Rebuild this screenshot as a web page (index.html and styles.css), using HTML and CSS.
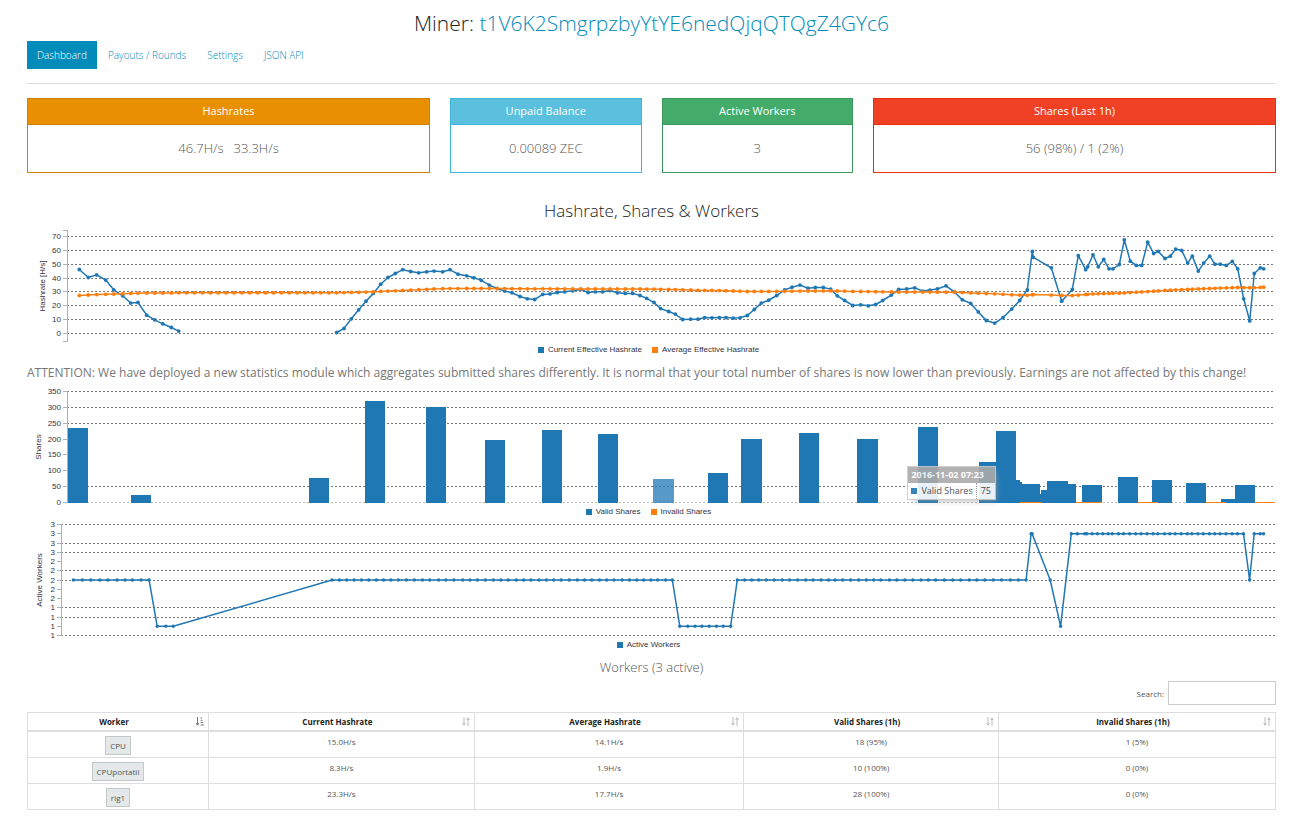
FILE: index.html
```html
<!DOCTYPE html>
<html lang="en">
  <head>
    <meta charset="UTF-8" />
    <meta name="viewport" content="width=device-width, initial-scale=1.0" />
    <title>Miner</title>
    <link rel="stylesheet" href="styles.css">
  </head>
  <body>
    <h1>Miner: <a href="#">t1V6K2SmgrpzbyYtYE6nedQjqQTQgZ4GYc6</a></h1>

    <nav class="tabs">
      <a class="active" href="#dashboard">Dashboard</a>
      <a href="#payouts">Payouts / Rounds</a>
      <a href="#settings">Settings</a>
      <a href="#api">JSON API</a>
    </nav>

    <div class="panels">
      <section class="panel wide warning">
        <h3>Hashrates</h3>
        <p><span>46.7H/s</span><span>33.3H/s</span></p>
      </section>
      <section class="panel info">
        <h3>Unpaid Balance</h3>
        <p>0.00089 ZEC</p>
      </section>
      <section class="panel success">
        <h3>Active Workers</h3>
        <p>3</p>
      </section>
      <section class="panel wide danger">
        <h3>Shares (Last 1h)</h3>
        <p>56 (98%) / 1 (2%)</p>
      </section>
    </div>

    <h2>Hashrate, Shares &amp; Workers</h2>
    <div class="chart">
      <svg id="hashrateChart" height="118"></svg>
      <div class="legend">
        <span class="blue">Current Effective Hashrate</span>
        <span class="orange">Average Effective Hashrate</span>
      </div>
    </div>

    <p class="notice">ATTENTION: We have deployed a new statistics module which aggregates submitted shares differently. It is normal that your total number of shares is now lower than previously. Earnings are not affected by this change!</p>

    <div class="chart">
      <svg id="sharesChart" height="120"></svg>
      <div class="legend">
        <span class="blue">Valid Shares</span>
        <span class="orange">Invalid Shares</span>
      </div>
      <div class="tooltip">
        <div class="tooltip-title">2016-11-02 07:23</div>
        <div class="tooltip-row">
          <span class="name">Valid Shares</span>
          <span class="value">75</span>
        </div>
      </div>
    </div>

    <div class="chart workers-chart">
      <svg id="workersChart" height="120"></svg>
      <div class="legend">
        <span class="blue">Active Workers</span>
      </div>
    </div>

    <h4>Workers (3 active)</h4>
    <div class="search">
      <label for="search">Search:</label>
      <input type="search" id="search" />
    </div>

    <svg class="defs">
      <symbol id="sort" viewBox="0 0 8 9">
        <path d="M2 0v8M0.5 6L2 8.200L3.500 6M6 9V1M4.500 3L6 0.800L7.500 3" />
      </symbol>
      <symbol id="sort-asc" viewBox="0 0 8 9">
        <path d="M1.500 0v8M0 6L1.500 8.200L3 6M4.500 1h1.500M4.500 3.300h2M4.500 5.600h2.700M4.500 8h3.500" />
      </symbol>
    </svg>
    <table>
      <colgroup>
        <col class="c1" /><col class="c2" /><col class="c3" /><col class="c4" /><col class="c5" />
      </colgroup>
      <thead>
        <tr>
          <th><div><span>Worker</span><svg class="sorted"><use href="#sort-asc" /></svg></div></th>
          <th><div><span>Current Hashrate</span><svg><use href="#sort" /></svg></div></th>
          <th><div><span>Average Hashrate</span><svg><use href="#sort" /></svg></div></th>
          <th><div><span>Valid Shares (1h)</span><svg><use href="#sort" /></svg></div></th>
          <th><div><span>Invalid Shares (1h)</span><svg><use href="#sort" /></svg></div></th>
        </tr>
      </thead>
      <tbody>
        <tr>
          <td><a href="#CPU">CPU</a></td>
          <td>15.0H/s</td>
          <td>14.1H/s</td>
          <td>18 (95%)</td>
          <td>1 (5%)</td>
        </tr>
        <tr>
          <td><a href="#CPUportatil">CPUportatil</a></td>
          <td>8.3H/s</td>
          <td>1.9H/s</td>
          <td>10 (100%)</td>
          <td>0 (0%)</td>
        </tr>
        <tr>
          <td><a href="#rig1">rig1</a></td>
          <td>23.3H/s</td>
          <td>17.7H/s</td>
          <td>28 (100%)</td>
          <td>0 (0%)</td>
        </tr>
      </tbody>
    </table>

    <script src="charts.js"></script>
  </body>
</html>
```

FILE: styles.css
```css
body {
  margin: 0;
  padding: 8px 18px 18px 27px;
  background: #fff;
  color: #555;
  font-family: 'Open Sans', sans-serif;
  font-size: 8px;
  line-height: 11px;
}
h1,
h2,
h3,
h4,
p {
  margin: 0;
  font-weight: 300;
  text-align: center;
}
a {
  color: #008cba;
  text-decoration: none;
}
h1 {
  color: #222;
  font-size: 21px;
  line-height: 30px;
}
h2 {
  margin: 25px 0 2px;
  color: #222;
  font-size: 17px;
  line-height: 26px;
}
h4 {
  margin: 7px 0 4px;
  font-size: 13px;
  line-height: 20px;
}

.tabs {
  display: flex;
  margin-top: 3px;
  padding-bottom: 14px;
  border-bottom: 1px solid #ddd;
}
.tabs a {
  padding: 0 10px;
  margin-right: 1px;
  font-size: 10px;
  font-weight: 300;
  line-height: 28px;
}
.tabs .active {
  background: #008cba;
  color: #fff;
}

.panels {
  display: grid;
  grid-template-columns: repeat(12, 1fr);
  gap: 20px;
  margin-top: 14px;
}
.panel {
  grid-column: span 2;
  border: 1px solid;
}
.panel.wide {
  grid-column: span 4;
}
.panel h3 {
  padding-bottom: 1px;
  border-bottom: 1px solid;
  border-color: inherit;
  color: #fff;
  font-size: 11px;
  font-weight: 400;
  line-height: 24px;
}
.panel p {
  display: flex;
  justify-content: center;
  gap: 10px;
  font-size: 13px;
  line-height: 47px;
}
.warning {
  border-color: #d08002;
}
.warning h3 {
  background: #e99002;
}
.info {
  border-color: #3db5d8;
}
.info h3 {
  background: #5bc0de;
}
.success {
  border-color: #3c9a5f;
}
.success h3 {
  background: #43ac6a;
}
.danger {
  border-color: #ea2f10;
}
.danger h3 {
  background: #f04124;
}

.chart {
  position: relative;
  color: #334;
  font-family: 'Liberation Sans', sans-serif;
}
.chart svg {
  display: block;
  width: 100%;
}
.workers-chart {
  margin-top: 2px;
}
.chart text {
  fill: #334;
  font-size: 8px;
}
.axis {
  fill: none;
  stroke: #a9b3bd;
  shape-rendering: crispEdges;
}
.grid {
  stroke: #777;
  stroke-dasharray: 2 2;
  shape-rendering: crispEdges;
}
.grid.base {
  stroke: #bbb;
}
.line {
  fill: none;
  stroke-width: 1.5;
}
.line.blue {
  stroke: #1f77b4;
}
.line.orange {
  stroke: #ff7f0e;
}
.dot.blue,
.bar {
  fill: #1f77b4;
}
.dot.orange,
.invalid {
  fill: #ff7f0e;
}
.bar,
.invalid {
  shape-rendering: crispEdges;
}
.bar.hover {
  opacity: 0.75;
}
.legend {
  display: flex;
  justify-content: center;
  gap: 10px;
  padding-right: 6px;
  line-height: 11px;
}
.legend span {
  display: flex;
  align-items: center;
  gap: 4px;
}
.legend span::before,
.tooltip .name::before {
  content: '';
  width: 6px;
  height: 6px;
  background: #1f77b4;
}
.legend .orange::before {
  background: #ff7f0e;
}

.notice {
  margin: 8px 0 3px;
  font-size: 12px;
  font-weight: 400;
  line-height: 20px;
  text-align: left;
  color: #777;
}

.tooltip {
  position: absolute;
  top: 80px;
  right: 280px;
  border: 1px solid #ccc;
  background: #fff;
  box-shadow: 3px 3px 6px -3px #999;
  color: #444;
  font-family: 'Open Sans', sans-serif;
  font-size: 9px;
  opacity: 0.9;
}
.tooltip-title {
  padding: 0 8px 0 3px;
  background: #aaa;
  color: #fff;
  font-weight: 700;
  line-height: 16px;
}
.tooltip-row {
  display: flex;
  line-height: 16px;
}
.tooltip .name {
  flex: 1;
  display: flex;
  align-items: center;
  gap: 4px;
  padding: 0 3px;
}
.tooltip .value {
  padding: 0 4px;
  border-left: 1px dotted #999;
}

.search {
  display: flex;
  justify-content: flex-end;
  align-items: center;
  gap: 4px;
  margin-bottom: 7px;
}
.search input {
  box-sizing: border-box;
  width: 108px;
  height: 24px;
  padding: 2px 4px;
  border: 1px solid #ccc;
  font: inherit;
}

.defs {
  display: none;
}
table {
  width: 100%;
  border-collapse: collapse;
  table-layout: fixed;
  text-align: center;
}
.c1 {
  width: 14.5%;
}
.c2 {
  width: 21.3%;
}
.c3 {
  width: 21.6%;
}
.c4 {
  width: 20.4%;
}
th,
td {
  border: 1px solid #ddd;
}
th {
  padding: 4px;
  border-bottom-width: 2px;
  color: #222;
  font-weight: 700;
  line-height: 9px;
}
th div {
  display: flex;
  align-items: center;
}
th span {
  flex: 1;
}
th svg {
  width: 8px;
  height: 9px;
  fill: none;
  stroke: #bbb;
}
th .sorted {
  stroke: #777;
}
td {
  padding: 4px 4px 2px;
  vertical-align: top;
}
td a {
  display: block;
  width: fit-content;
  margin: 0 auto;
  padding: 3px 4px;
  border: 1px solid #c4c8c8;
  background: #e3e8e8;
  color: #555;
}
```

FILE: charts.js
```js
// time axis runs from 0 to SPAN
const SPAN = 1208;

const hashrate = [
  [12.3, 46.2], [21.3, 40.4], [29.7, 42.3], [38.7, 38.5], [46.7, 31.5], [55.7, 27.2], [63.7, 21.9],
  [71, 22.4], [79.7, 13.2], [87.7, 9.9], [95.7, 7], [104.3, 4.3], [111.7, 1.7],
  null,
  [269.7, 0.7], [277, 3.6], [284.3, 10.6], [291.7, 17.1], [299, 23.3], [306.3, 28.9], [313.7, 35.6],
  [321, 40.4], [328.3, 43.3], [335.7, 46], [343.7, 44.7], [351.7, 43.8], [359.7, 44.5], [367, 45],
  [375.7, 44.5], [383, 46], [391, 42.8], [399.7, 41.6], [407, 40.2], [414.3, 38.3], [422.3, 34.9],
  [430.3, 32.5], [437.7, 30.6], [445, 29.4], [453, 26.7], [460.3, 25], [467.7, 24.5], [475.7, 28.2],
  [483, 28.6], [490.3, 29.6], [497.7, 30.1], [505.7, 30.8], [513.7, 31.8], [521, 29.6], [528.3, 30.1],
  [535.7, 30.1], [543, 31], [550.3, 29.4], [558.3, 28.9], [565.7, 28.9], [573, 27.4], [579.7, 25.3],
  [587, 22.4], [593.7, 18], [601.7, 15.9], [608.3, 14], [615.7, 10.1], [623.7, 10.3], [631, 10.3],
  [637.7, 11.5], [645, 11.3], [652.3, 11.5], [659, 11.5], [666.3, 11.1], [673, 11.3], [680.3, 13],
  [687.3, 17.3], [694.3, 21.9], [701.7, 24], [709.7, 27.4], [717.7, 31.5], [725, 33.4], [733, 34.9],
  [741, 32.7], [748.3, 33.2], [756.3, 33.2], [763.7, 32], [770.3, 27.2], [777.7, 23.8], [785.7, 20.2],
  [793.7, 20.7], [801.3, 20], [808.7, 20.9], [815.7, 23.8], [824.3, 27.7], [831.7, 31.8], [839.7, 32.2],
  [847.7, 33], [855.7, 30.6], [863, 31.3], [870.3, 32.2], [879, 34.4], [887.3, 30.1], [895.3, 24.3],
  [903.7, 21.7], [911.3, 15.6], [919.3, 9.4], [927.7, 7.5], [936, 11.5], [944.7, 17.6], [952.7, 23.8],
  [960.3, 31.5], [965.3, 59.2], [966.3, 54.9], [984.3, 47.4], [994.7, 23.3], [1005.3, 31.8],
  [1011.3, 56.1], [1018.7, 46], [1020.7, 48.1], [1026, 56.8], [1031.3, 48.1], [1036.7, 53.4],
  [1042, 46.7], [1046, 46.7], [1052.3, 49.8], [1057.3, 67.6], [1063.3, 52.2], [1069.3, 49.1],
  [1074.7, 49.1], [1080.7, 65.9], [1086.7, 57.7], [1091.3, 59.2], [1098, 54.1], [1103.3, 55.8],
  [1108.7, 60.9], [1114.7, 59.9], [1120.7, 50.8], [1125.3, 55.8], [1131.3, 45], [1136.7, 50.8],
  [1142.7, 55.8], [1148, 50], [1153.3, 50], [1159.3, 49.1], [1165.3, 52], [1170.7, 46.7],
  [1176.7, 25], [1182.7, 9.1], [1187.3, 43.3], [1193.3, 47.4], [1196.7, 46.7],
];

const averageTrend = [
  [12, 27.5], [38.7, 28.3], [71, 29.1], [120, 29.4], [270, 29.4], [300, 29.9], [328, 30.8],
  [343, 31.3], [367, 32.2], [383, 32.4], [422, 32.5], [445, 32.3], [573, 32.1], [602, 31.8],
  [631, 31.2], [659, 30.9], [680, 30.3], [710, 30.4], [763, 30.8], [786, 30.4], [832, 29.9],
  [887, 29.8], [903, 29.3], [928, 28.6], [945, 27.9], [960, 27.5], [966, 28.1], [985, 27.7],
  [1005, 27.3], [1011, 27.7], [1026, 28.6], [1052, 29.1], [1080, 30.2], [1103, 31.3],
  [1136, 32.3], [1170, 33.2], [1187, 33], [1197, 33.4],
];

// [start, width, shares]
const validShares = [
  [1, 20, 234], [64, 20, 24], [242, 20, 77], [298, 20, 319], [359, 20, 300], [418, 20, 197],
  [475, 20, 228], [531, 20, 216], [586, 21, 75], [641, 20, 93], [674, 21, 200], [732, 20, 219],
  [790, 21, 200], [851, 20, 238], [912, 20, 128], [929, 20, 225], [933, 20, 71], [935, 20, 65],
  [953, 20, 59], [973, 20, 27], [974, 20, 40], [980, 21, 68], [989, 20, 59], [1015, 20, 55],
  [1051, 20, 81], [1085, 20, 71], [1119, 20, 62], [1154, 20, 12], [1168, 20, 55],
];
const invalidShares = [[953, 21], [1009, 26], [1071, 20], [1139, 20], [1188, 20]];

function averageAt(t) {
  const i = averageTrend.findIndex((p) => p[0] >= t);
  if (i < 1) return averageTrend[0][1];
  const [t0, v0] = averageTrend[i - 1];
  const [t1, v1] = averageTrend[i];
  return v0 + ((v1 - v0) * (t - t0)) / (t1 - t0);
}

function workersAt(t) {
  if (t > 90 && t < 115) return 1;
  if (t > 612 && t < 670) return 1;
  if (t > 990 && t < 1000) return 1;
  if (t < 963 || (t > 980 && t < 990) || (t > 1180 && t < 1185)) return 2;
  return 3;
}

const samples = hashrate.filter((p) => p);
const gapTimes = [];
for (let i = 1; i < 20; i++) gapTimes.push(111.7 + i * 7.9);
const average = samples
  .map((p) => p[0])
  .concat(gapTimes)
  .sort((a, b) => a - b)
  .map((t) => [t, averageAt(t)]);
const workers = samples.map((p) => [p[0], workersAt(p[0])]);

// Axis, tick labels and grid lines shared by the three charts
function createChart(id, o) {
  const svg = document.getElementById(id);
  const width = svg.clientWidth - 1;
  const x = (t) => o.left + (t / SPAN) * (width - o.left);
  const y = (v) => o.y0 - (v - o.min) * o.scale;
  let html = '';
  o.grid.forEach((v) => {
    const gy = Math.floor(y(v)) + 0.5;
    const cls = o.bars && v === 0 ? 'grid base' : 'grid';
    html += `<line class="${cls}" x1="${o.left}" x2="${width}" y1="${gy}" y2="${gy}" />`;
  });
  html += `<path class="axis" d="M${o.left - 4} ${o.top}H${o.left}V${o.bottom}h-4" />`;
  o.ticks.forEach((v) => {
    const ty = Math.floor(y(v)) + 0.5;
    html += `<path class="axis" d="M${o.left - 4} ${ty}h4" />`;
    html += `<text x="${o.left - 6}" y="${ty + 2}" text-anchor="end">${Math.round(v)}</text>`;
  });
  const mid = (o.top + o.bottom) / 2;
  html += `<text transform="translate(${o.labelX} ${mid}) rotate(-90)" text-anchor="middle">${o.label}</text>`;
  return { svg, x, y, html };
}

function drawLine(c, points, color, r) {
  let d = '';
  let dots = '';
  let move = true;
  points.forEach((p) => {
    if (!p) {
      move = true;
      return;
    }
    const px = c.x(p[0]).toFixed(1);
    const py = c.y(p[1]).toFixed(1);
    d += (move ? 'M' : 'L') + px + ' ' + py;
    dots += `<circle class="dot ${color}" cx="${px}" cy="${py}" r="${r}" />`;
    move = false;
  });
  c.html += `<path class="line ${color}" d="${d}" />${dots}`;
}

function drawHashrate() {
  const ticks = [0, 10, 20, 30, 40, 50, 60, 70];
  const c = createChart('hashrateChart', {
    left: 40, top: 4.5, bottom: 115.5, y0: 107.5, min: 0, scale: 1.386,
    ticks, grid: ticks, label: 'Hashrate [H/s]', labelX: 18,
  });
  drawLine(c, hashrate, 'blue', 1.9);
  drawLine(c, average, 'orange', 1.9);
  c.svg.innerHTML = c.html;
}

function drawShares() {
  const c = createChart('sharesChart', {
    left: 40, top: 5.5, bottom: 116.5, y0: 116.5, min: 0, scale: 0.317, bars: true,
    ticks: [0, 50, 100, 150, 200, 250, 300, 350],
    grid: [0, 50, 250, 300, 350], label: 'Shares', labelX: 14,
  });
  validShares.forEach(([t, w, v]) => {
    const top = c.y(v);
    const cls = v === 75 ? 'bar hover' : 'bar';
    c.html += `<rect class="${cls}" x="${c.x(t)}" y="${top}" width="${w}" height="${116.5 - top}" />`;
  });
  invalidShares.forEach(([t, w]) => {
    c.html += `<rect class="invalid" x="${c.x(t)}" y="116" width="${w}" height="1" />`;
  });
  c.svg.innerHTML = c.html;
}

function drawWorkers() {
  const ticks = [];
  for (let i = 4; i <= 16; i++) ticks.push(i / 5);
  const c = createChart('workersChart', {
    left: 34, top: 5.5, bottom: 116.5, y0: 116.5, min: 0.8, scale: 46.25,
    ticks, grid: [0.8, 1.2, 1.4, 2, 2.2, 2.6, 2.8, 3.2], label: 'Active Workers', labelX: 15,
  });
  drawLine(c, workers, 'blue', 1.7);
  c.svg.innerHTML = c.html;
}

function draw() {
  drawHashrate();
  drawShares();
  drawWorkers();
}

draw();
window.addEventListener('resize', draw);
```
